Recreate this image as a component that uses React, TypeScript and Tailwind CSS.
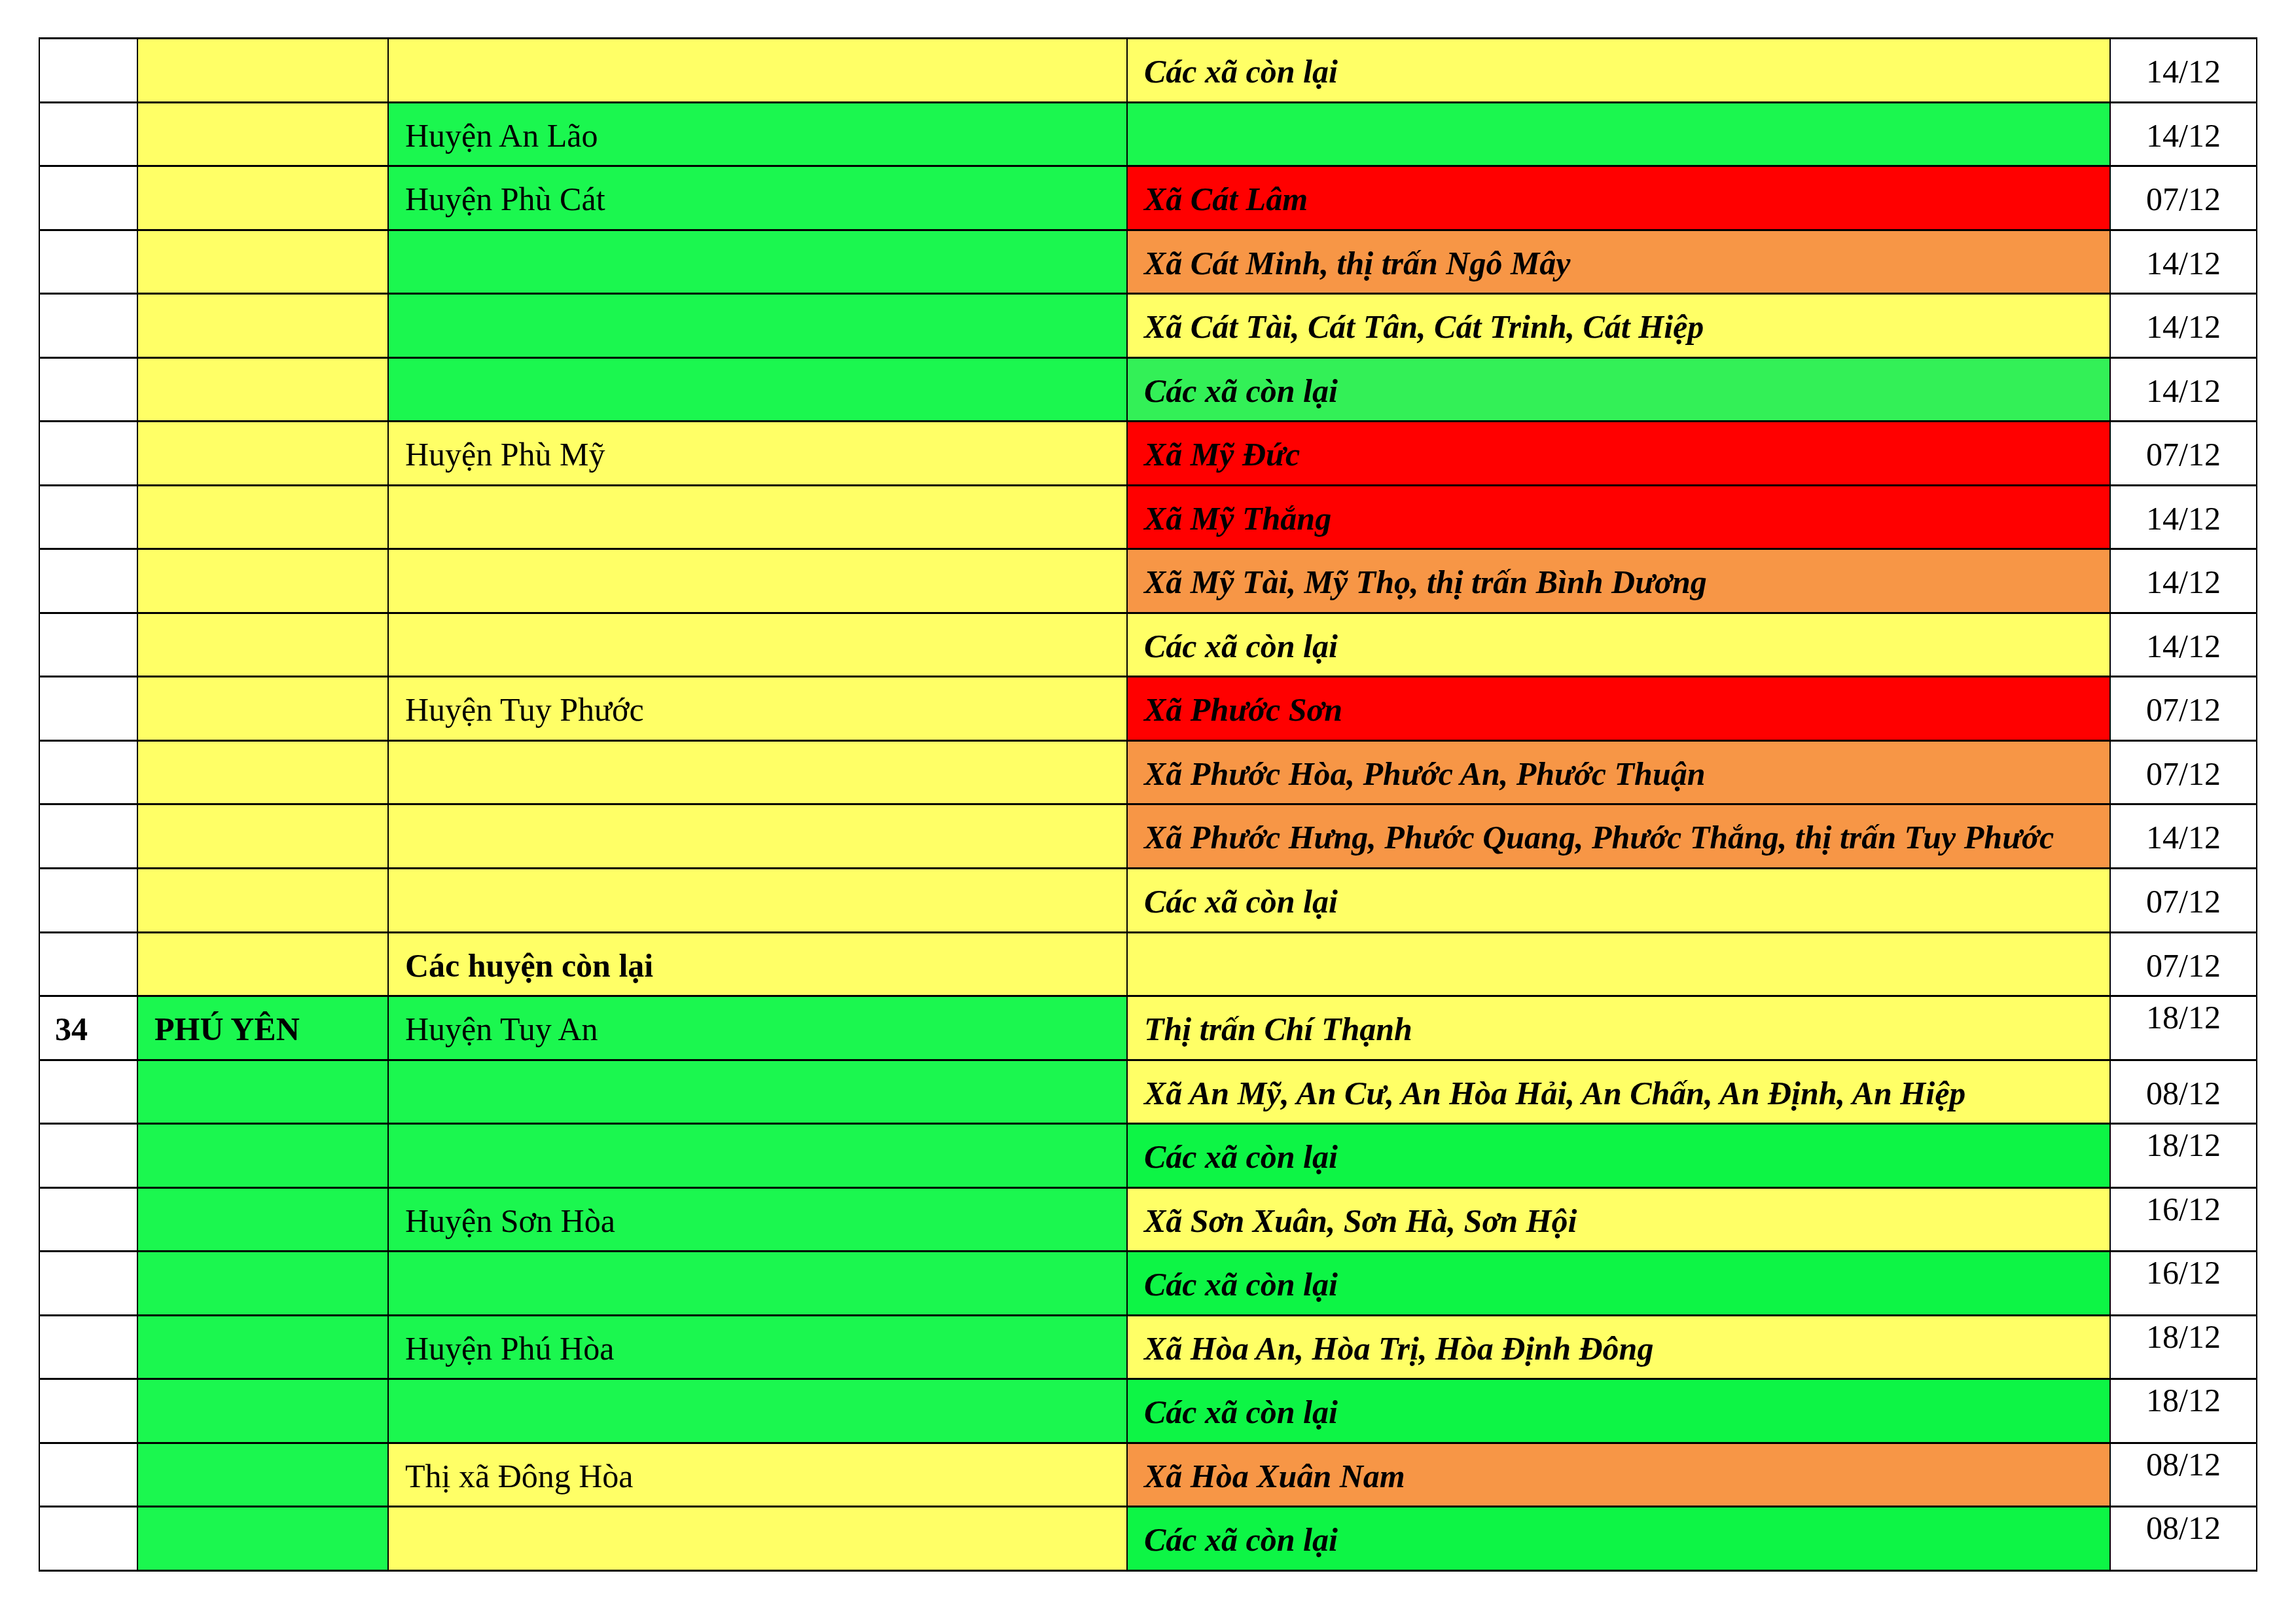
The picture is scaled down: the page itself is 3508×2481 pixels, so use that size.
const Y = "bg-[#ffff66]";
const G = "bg-[#1bf74f]";
const G2 = "bg-[#33f057]";
const G3 = "bg-[#0df545]";
const R = "bg-[#ff0000]";
const O = "bg-[#f79646]";
const W = "bg-white";

type Row = {
  no?: string;
  prov?: string;
  provBg: string;
  dist?: string;
  distBold?: boolean;
  distBg: string;
  ward?: string;
  wardBg: string;
  date: string;
  raised?: boolean;
};

const rows: Row[] = [
  { provBg: Y, distBg: Y, ward: "Các xã còn lại", wardBg: Y, date: "14/12" },
  { provBg: Y, dist: "Huyện An Lão", distBg: G, wardBg: G, date: "14/12" },
  { provBg: Y, dist: "Huyện Phù Cát", distBg: G, ward: "Xã Cát Lâm", wardBg: R, date: "07/12" },
  { provBg: Y, distBg: G, ward: "Xã Cát Minh, thị trấn Ngô Mây", wardBg: O, date: "14/12" },
  { provBg: Y, distBg: G, ward: "Xã Cát Tài, Cát Tân, Cát Trinh, Cát Hiệp", wardBg: Y, date: "14/12" },
  { provBg: Y, distBg: G, ward: "Các xã còn lại", wardBg: G2, date: "14/12" },
  { provBg: Y, dist: "Huyện Phù Mỹ", distBg: Y, ward: "Xã Mỹ Đức", wardBg: R, date: "07/12" },
  { provBg: Y, distBg: Y, ward: "Xã Mỹ Thắng", wardBg: R, date: "14/12" },
  { provBg: Y, distBg: Y, ward: "Xã Mỹ Tài, Mỹ Thọ, thị trấn Bình Dương", wardBg: O, date: "14/12" },
  { provBg: Y, distBg: Y, ward: "Các xã còn lại", wardBg: Y, date: "14/12" },
  { provBg: Y, dist: "Huyện Tuy Phước", distBg: Y, ward: "Xã Phước Sơn", wardBg: R, date: "07/12" },
  { provBg: Y, distBg: Y, ward: "Xã Phước Hòa, Phước An, Phước Thuận", wardBg: O, date: "07/12" },
  { provBg: Y, distBg: Y, ward: "Xã Phước Hưng, Phước Quang, Phước Thắng, thị trấn Tuy Phước", wardBg: O, date: "14/12" },
  { provBg: Y, distBg: Y, ward: "Các xã còn lại", wardBg: Y, date: "07/12" },
  { provBg: Y, dist: "Các huyện còn lại", distBold: true, distBg: Y, wardBg: Y, date: "07/12" },
  { no: "34", prov: "PHÚ YÊN", provBg: G, dist: "Huyện Tuy An", distBg: G, ward: "Thị trấn Chí Thạnh", wardBg: Y, date: "18/12", raised: true },
  { provBg: G, distBg: G, ward: "Xã An Mỹ, An Cư, An Hòa Hải, An Chấn, An Định, An Hiệp", wardBg: Y, date: "08/12" },
  { provBg: G, distBg: G, ward: "Các xã còn lại", wardBg: G3, date: "18/12", raised: true },
  { provBg: G, dist: "Huyện Sơn Hòa", distBg: G, ward: "Xã Sơn Xuân, Sơn Hà, Sơn Hội", wardBg: Y, date: "16/12", raised: true },
  { provBg: G, distBg: G, ward: "Các xã còn lại", wardBg: G3, date: "16/12", raised: true },
  { provBg: G, dist: "Huyện Phú Hòa", distBg: G, ward: "Xã Hòa An, Hòa Trị, Hòa Định Đông", wardBg: Y, date: "18/12", raised: true },
  { provBg: G, distBg: G, ward: "Các xã còn lại", wardBg: G3, date: "18/12", raised: true },
  { provBg: G, dist: "Thị xã Đông Hòa", distBg: Y, ward: "Xã Hòa Xuân Nam", wardBg: O, date: "08/12", raised: true },
  { provBg: G, distBg: Y, ward: "Các xã còn lại", wardBg: G3, date: "08/12", raised: true },
];

export default function App() {
  return (
    <div className="min-h-screen bg-white pt-[57px] pl-[59px] font-['Liberation_Serif','Times_New_Roman',serif] text-[50px] leading-[56px] text-black">
      <div className="grid h-[2344px] w-[3390px] grid-cols-[148px_381px_1127px_1500px_222px] grid-rows-24 gap-x-[2px] gap-y-[3px] border-x-[2px] border-y-[3px] border-black bg-black">
        {rows.map((r, i) => (
          <div key={i} className="contents">
            <div className={`${W} pl-[23px] pt-[21px] font-bold`}>{r.no}</div>
            <div className={`${r.provBg} pl-[25px] pt-[21px] font-bold`}>{r.prov}</div>
            <div className={`${r.distBg} pl-[25px] pt-[21px] ${r.distBold ? "font-bold" : ""}`}>{r.dist}</div>
            <div className={`${r.wardBg} pl-[25px] pt-[21px] font-bold italic whitespace-nowrap`}>{r.ward}</div>
            <div className={`${W} text-center ${r.raised ? "pt-[3px]" : "pt-[21px]"}`}>{r.date}</div>
          </div>
        ))}
      </div>
    </div>
  );
}
